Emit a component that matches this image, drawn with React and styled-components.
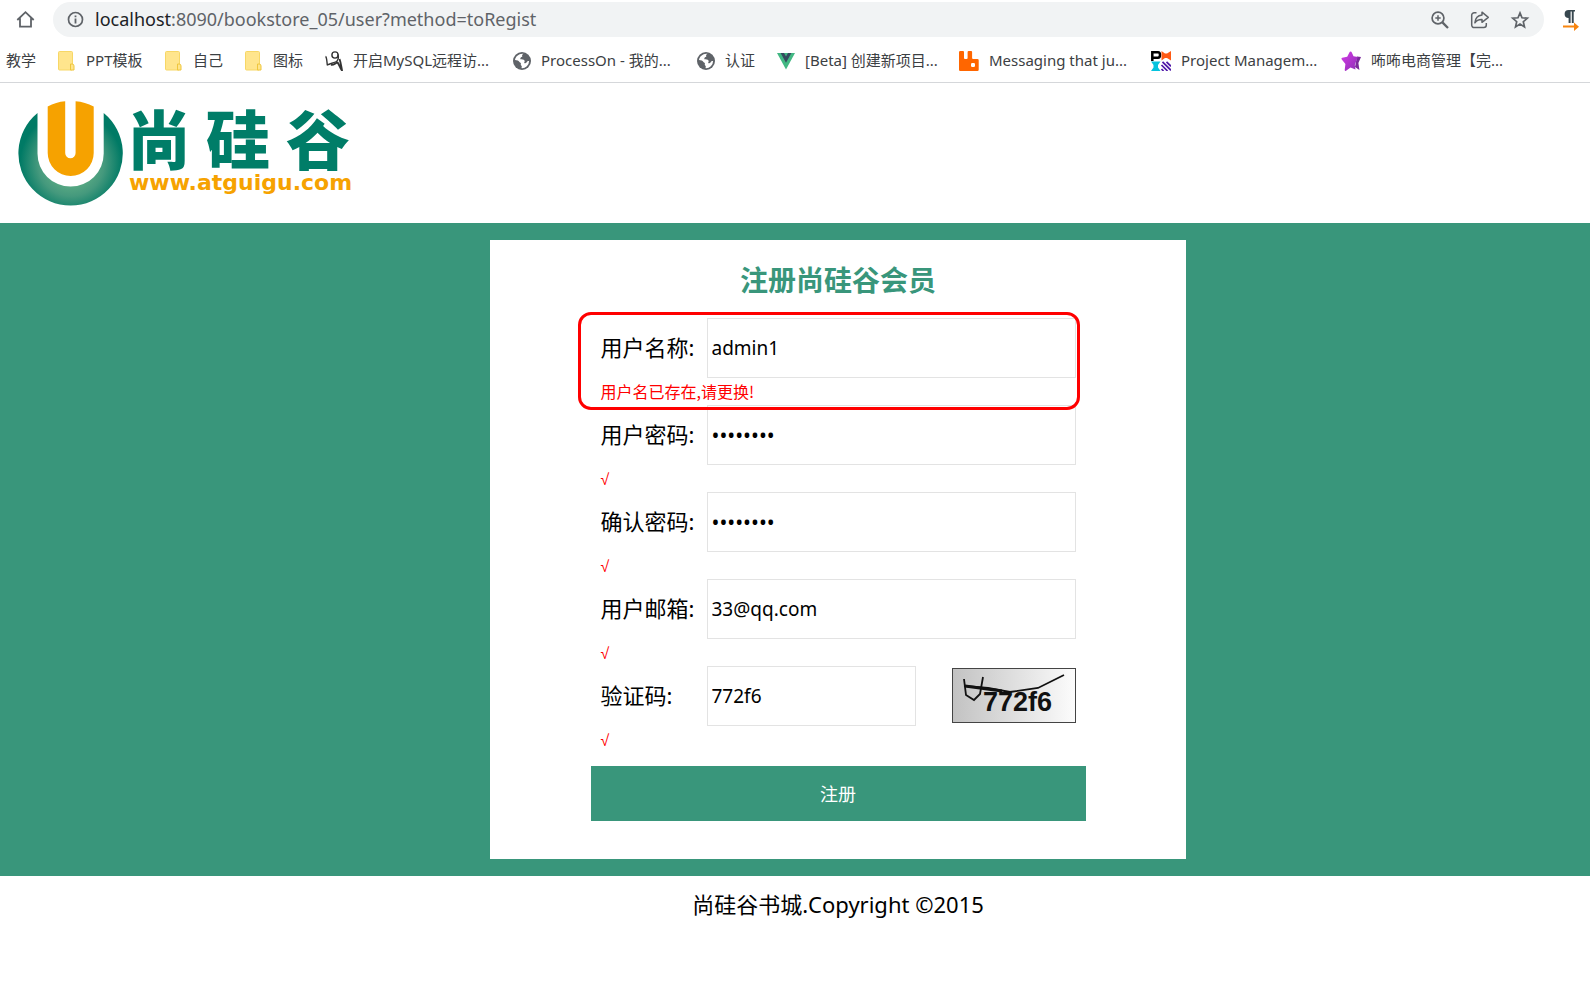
import React from "react";
import styled, { createGlobalStyle } from "styled-components";

const GREEN = "#39967b";
const PAGE_SHIFT = "86px";

const GlobalStyle = createGlobalStyle`
  *, *::before, *::after { box-sizing: border-box; }
  body {
    margin: 0;
    background: #fff;
    color: #000;
    font-family: "Noto Sans", "Noto Sans CJK SC", sans-serif;
  }
`;

/* ---------- browser chrome ---------- */

const Chrome = styled.header`
  border-bottom: 1px solid #d5d7da;
`;

const AddressRow = styled.div`
  display: flex;
  align-items: center;
  height: 39px;
  padding: 0 10px 0 16px;
`;

const IconButton = styled.button`
  display: flex;
  flex: none;
  padding: 0;
  border: 0;
  background: none;
  color: #5f6368;
  svg { display: block; }
`;

const Omnibox = styled.div`
  display: flex;
  flex: 1;
  align-items: center;
  height: 35px;
  margin: 0 18px;
  padding: 0 14px;
  border-radius: 18px;
  background: #f1f3f4;
  color: #5f6368;
  svg { flex: none; display: block; }
`;

const Url = styled.div`
  flex: 1;
  margin-left: 11px;
  padding-bottom: 2px;
  font-size: 18px;
  line-height: 24px;
  white-space: nowrap;
  b { color: #202124; font-weight: 400; }
`;

const Actions = styled.div`
  display: flex;
  gap: 20px;
`;

const Bookmarks = styled.nav`
  display: flex;
  align-items: center;
  height: 43px;
  padding-left: 6px;
  overflow: hidden;
`;

const Bookmark = styled.a`
  display: flex;
  flex: none;
  align-items: center;
  gap: 10px;
  width: ${(p) => p.$width}px;
  color: #3c4043;
  font-size: 15px;
  line-height: 22px;
  text-decoration: none;
  white-space: nowrap;
  svg { flex: none; display: block; }
  span { padding-bottom: 2px; }
`;

/* ---------- page ---------- */

const Brand = styled.div`
  height: 140px;
  padding-left: 17px;
  svg { display: block; }
`;

const Band = styled.main`
  display: flex;
  justify-content: center;
  padding: 17px 0 17px ${PAGE_SHIFT};
  background: ${GREEN};
`;

const Card = styled.form`
  display: flex;
  flex-direction: column;
  align-items: center;
  width: 696px;
  padding-bottom: 38px;
  background: #fff;
`;

const Title = styled.h1`
  margin: 0;
  padding: 19px 0;
  color: ${GREEN};
  font-family: "Noto Sans CJK SC", sans-serif;
  font-size: 28px;
  line-height: 40px;
  font-weight: 700;
`;

const Fields = styled.div`
  position: relative;
  width: 495px;
`;

const Field = styled.div`
  padding: 0 10px;
`;

const FieldRow = styled.div`
  display: flex;
  align-items: center;
`;

const Label = styled.label`
  flex: none;
  width: 106px;
  padding-bottom: 2px;
  font-size: 22px;
  line-height: 32px;
  white-space: nowrap;
`;

const TextInput = styled.input`
  flex: ${(p) => (p.$short ? "0 0 209px" : "1")};
  min-width: 0;
  height: 60px;
  padding: 0 4px;
  border: 1px solid #e3e3e3;
  border-radius: 0;
  outline: 0;
  background: #fff;
  color: #000;
  font-family: "Noto Sans", sans-serif;
  font-size: ${(p) => (p.type === "password" ? 21 : 19)}px;
`;

const Message = styled.div`
  height: 27px;
  color: #f00;
  font-family: "Noto Sans CJK SC", sans-serif;
  font-size: 16px;
  line-height: 26px;
`;

const Tick = styled.span`
  font-family: "Liberation Sans", sans-serif;
`;

const Highlight = styled.div`
  position: absolute;
  inset: -6px 6px auto -13px;
  height: 98px;
  border: 3px solid #f00;
  border-radius: 13px;
  pointer-events: none;
`;

const Captcha = styled.svg`
  display: block;
  margin: 0 0 2px auto;
`;

const Submit = styled.button`
  width: 495px;
  height: 55px;
  margin-top: 13px;
  padding: 0 0 2px;
  border: 0;
  background: ${GREEN};
  color: #fff;
  font-family: "Noto Sans CJK SC", sans-serif;
  font-size: 18px;
`;

const Footer = styled.footer`
  padding: 12px 0 14px ${PAGE_SHIFT};
  font-size: 22px;
  line-height: 32px;
  text-align: center;
`;

/* ---------- icons ---------- */

const Home = () => (
  <svg width="19" height="19" viewBox="0 0 19 19" fill="none" stroke="currentColor" strokeWidth="1.8">
    <path d="M1.3 10 9.5 2.2 17.700 10M4 8.200V16.700H15V8.200" />
  </svg>
);

const Info = () => (
  <svg width="17" height="17" viewBox="0 0 17 17">
    <circle cx="8.500" cy="8.500" r="7" fill="none" stroke="currentColor" strokeWidth="1.700" />
    <path d="M7.600 7.500h1.800v5H7.600zM7.600 4.500h1.800v1.800H7.600z" fill="currentColor" />
  </svg>
);

const ZoomIn = () => (
  <svg width="20" height="20" viewBox="0 0 20 20" fill="none" stroke="currentColor">
    <circle cx="8" cy="8" r="5.900" strokeWidth="1.700" />
    <path d="M12.400 12.400 18 18" strokeWidth="2.300" />
    <path d="M5.300 8h5.400M8 5.300v5.400" strokeWidth="1.500" />
  </svg>
);

const Share = () => (
  <svg width="20" height="20" viewBox="0 0 20 20" fill="none" stroke="currentColor" strokeWidth="1.500" strokeLinejoin="round">
    <path d="M6.500 2.700H4.200A2.500 2.500 0 0 0 1.700 5.200v9.900a2.500 2.500 0 0 0 2.500 2.500h9.600a2.500 2.500 0 0 0 2.500-2.500v-2" />
    <path d="M12 2.200 18.300 7.300 12 12.300V9.500C8.500 9.400 6.300 10.500 4.900 12.800 5.300 8.600 7.800 5.600 12 5.100Z" />
  </svg>
);

const Star = () => (
  <svg width="20" height="20" viewBox="0 0 20 20" fill="none" stroke="currentColor" strokeWidth="1.700">
    <path d="m10 2.900 2 4.900 5.300.4-4 3.500 1.200 5.200L10 14.100l-4.500 2.800 1.200-5.200-4-3.500L8 7.800Z" />
  </svg>
);

const Pilcrow = () => (
  <svg width="18" height="22" viewBox="0 0 18 22">
    <path d="M13 1v1.500H11.700V14H9.800V2.500H8.600V14H6.600V9A4 4 0 0 1 6.600 1Z" fill="#37474f" />
    <path d="M1 16.600h11v-3.200l5 4.300-5 4.300v-3.400H1Z" fill="#f8850f" />
  </svg>
);

const Folder = () => (
  <svg width="18" height="20" viewBox="0 0 18 20">
    <rect x=".5" y=".5" width="14" height="18.500" rx="1" fill="#ffe58d" stroke="#f7d766" />
    <path d="M12.500 13h1.600q1.900 0 1.900 1.900V19h-3.500Z" fill="#ffe58d" stroke="#efc63c" />
  </svg>
);

const Figure = () => (
  <svg width="18" height="20" viewBox="0 0 18 20" fill="none" stroke="#333" strokeLinejoin="round">
    <circle cx="10" cy="4" r="3.100" strokeWidth="1.400" />
    <path d="M.5 5.500C1.800 6 1.800 10 2.300 14 5 12.500 9 12 11.500 10.500 13.300 9 13.700 6.500 13 3.500" strokeWidth="1.400" />
    <path d="M6 13.800C9 14.500 10 12 12.500 11.500 14 13 14.500 16 17 19.500 16.300 16 16 12 14.500 8" strokeWidth="1.900" />
  </svg>
);

const Globe = () => (
  <svg width="18" height="18" viewBox="0 0 18 18">
    <circle cx="9" cy="9" r="9" fill="#5f6368" />
    <path
      d="M10.500 1.800C9.300 2.500 8.800 3.600 9.300 4.800 8 5 7.200 6 7.300 7.300c1.600.2 3.400 0 4.200 1.300.6 1-.3 1.600-.3 2.500.9.500 2 .2 2.500-.8.500-1 1.300-1.500 2.400-1.300a7.100 7.100 0 0 1-7.700 7.100c.7-.9.500-1.700-.2-2.500-.7-.8-.3-1.700-.3-2.600C6.500 11 6 9 4.800 8.600 3.900 8.300 2.900 8.200 2 8 2.500 4.500 6 1.200 10.500 1.800Z"
      fill="#fff"
    />
  </svg>
);

const Vue = () => (
  <svg width="18" height="18" viewBox="0 0 18 18">
    <path d="M0 1h18L9 17.500Z" fill="#42b883" />
    <path d="M3.600 1H7l2 3.400L11 1h3.400L9 10.800Z" fill="#35495e" />
  </svg>
);

const Rabbit = () => (
  <svg width="20" height="20" viewBox="0 0 20 20">
    <path
      d="M1.200 0H4q1 0 1 1v6q0 1 1 1h1.600q1 0 1-1V1q0-1 1-1h2.500q1 0 1 1v6q0 1 1 1H18.500q1.200 0 1.200 1.200v9.600q0 1.200-1.200 1.200H1.200Q0 20 0 18.800V1.200Q0 0 1.200 0Z"
      fill="#f60"
    />
    <rect x="12" y="12" width="4" height="4" rx="1.200" fill="#fff" />
  </svg>
);

const ProjectGrid = () => (
  <svg width="20" height="20" viewBox="0 0 20 20">
    <path d="M1.300 10V1.300H7q2 0 2 2.700t-2 2.700H1" fill="none" stroke="#000" strokeWidth="2.500" />
    <path d="M10.500 0 14 2.500h2L20 0v9.500L16 7h-2l-3.500 2.500Z" fill="#ff5a14" />
    <path d="M0 10.500h9.500L7 14v2.500L9.500 20H0l2.500-3.500V14Z" fill="#05c3de" />
    <path d="m10.500 14 6 6M10.500 18l2 2M11.500 10.800l8.500 8.500M15.500 10.800l4.500 4.500" stroke="#4f17a8" strokeWidth="1.700" />
  </svg>
);

const PurpleStar = () => (
  <svg width="20" height="20" viewBox="0 0 20 20">
    <defs>
      <linearGradient id="starFill" x1="0" y1="0" x2="1" y2="1">
        <stop offset="0" stopColor="#d63be8" />
        <stop offset="1" stopColor="#8b2fb4" />
      </linearGradient>
    </defs>
    <path d="m16 5.500 4 .5-2.600 5.900 1 7.100-4.400-3Z" fill="#7c2a9c" />
    <path d="M9.500.5q1 0 1.300 1L12.500 5.300l4.300.6-3 8 .7 4.600-5-2L4.700 20q-1 0-1-1l.7-6L.6 8.300Q0 7 1.200 6.700l5-1L8.500 1.300Q8.800.5 9.500.5Z" fill="url(#starFill)" />
  </svg>
);

const LogoGlyph = styled.text`
  fill: #007d68;
  font-family: "Noto Sans CJK SC", sans-serif;
  font-size: 64px;
  font-weight: 900;
`;

const LogoUrl = styled.text`
  fill: #f6a200;
  font-family: "DejaVu Sans", sans-serif;
  font-size: 22px;
  font-weight: 700;
`;

const Logo = () => (
  <svg width="345" height="140" viewBox="17 83 345 140" role="img" aria-label="尚硅谷">
    <defs>
      <radialGradient id="ring" gradientUnits="userSpaceOnUse" cx="71" cy="163" r="51">
        <stop offset=".4" stopColor="#5bab84" />
        <stop offset=".65" stopColor="#45997d" />
        <stop offset="1" stopColor="#007a65" />
      </radialGradient>
    </defs>
    <path d="M37.500 113A52.200 52.200 0 1 0 103.700 113V153.500a33.100 33.100 0 0 1-66.200 0Z" fill="url(#ring)" />
    <path
      d="M47.700 106.500Q56 102 65.200 101.300V153a5.200 5.200 0 0 0 10.400 0V101.300Q85 102 93.700 106.500V153a23 23 0 0 1-46 0Z"
      fill="#f6a200"
    />
    <LogoGlyph x="127" y="164">尚</LogoGlyph>
    <LogoGlyph x="206" y="164">硅</LogoGlyph>
    <LogoGlyph x="286" y="164">谷</LogoGlyph>
    <LogoUrl x="129" y="190">www.atguigu.com</LogoUrl>
  </svg>
);

const CaptchaImage = () => (
  <Captcha width="124" height="55" viewBox="0 0 124 55" role="img" aria-label="772f6">
    <defs>
      <linearGradient id="paper">
        <stop offset="0" stopColor="#c2c2c2" />
        <stop offset="1" stopColor="#fcfcfc" />
      </linearGradient>
    </defs>
    <rect x=".5" y=".5" width="123" height="54" fill="url(#paper)" stroke="#444" />
    <text x="31" y="43" fontFamily='"Liberation Sans", sans-serif' fontWeight="700" fontSize="27" fill="#111">
      772f6
    </text>
    <path d="M12 18 36 20 58 24 86 20 112 7" fill="none" stroke="#111" strokeWidth="1.800" />
    <path d="M13 18 50 23" stroke="#111" strokeWidth="3" />
    <path d="M12 11 14 27 22 32 28 26 31 9" fill="none" stroke="#111" strokeWidth="1.800" />
  </Captcha>
);

/* ---------- data ---------- */

const bookmarks = [
  { text: "教学", width: 52 },
  { icon: <Folder />, text: "PPT模板", width: 107 },
  { icon: <Folder />, text: "自己", width: 80 },
  { icon: <Folder />, text: "图标", width: 80 },
  { icon: <Figure />, text: "开启MySQL远程访...", width: 188 },
  { icon: <Globe />, text: "ProcessOn - 我的...", width: 184 },
  { icon: <Globe />, text: "认证", width: 80 },
  { icon: <Vue />, text: "[Beta] 创建新项目...", width: 182 },
  { icon: <Rabbit />, text: "Messaging that ju...", width: 192 },
  { icon: <ProjectGrid />, text: "Project Managem...", width: 190 },
  { icon: <PurpleStar />, text: "咘咘电商管理【完...", width: 190 },
];

const fields = [
  { id: "username", label: "用户名称:", type: "text", value: "admin1", message: "用户名已存在,请更换!" },
  { id: "password", label: "用户密码:", type: "password", value: "12345678" },
  { id: "confirm", label: "确认密码:", type: "password", value: "12345678" },
  { id: "email", label: "用户邮箱:", type: "text", value: "33@qq.com" },
  { id: "code", label: "验证码:", type: "text", value: "772f6", captcha: true },
];

export default function App() {
  return (
    <>
      <GlobalStyle />
      <Chrome>
        <AddressRow>
          <IconButton type="button" aria-label="Home"><Home /></IconButton>
          <Omnibox>
            <Info />
            <Url><b>localhost</b>:8090/bookstore_05/user?method=toRegist</Url>
            <Actions>
              <IconButton type="button" aria-label="Zoom"><ZoomIn /></IconButton>
              <IconButton type="button" aria-label="Share"><Share /></IconButton>
              <IconButton type="button" aria-label="Bookmark"><Star /></IconButton>
            </Actions>
          </Omnibox>
          <IconButton type="button" aria-label="Extension"><Pilcrow /></IconButton>
        </AddressRow>
        <Bookmarks>
          {bookmarks.map((b) => (
            <Bookmark key={b.text} href="#" $width={b.width}>
              {b.icon}
              <span>{b.text}</span>
            </Bookmark>
          ))}
        </Bookmarks>
      </Chrome>

      <Brand><Logo /></Brand>

      <Band>
        <Card onSubmit={(e) => e.preventDefault()}>
          <Title>注册尚硅谷会员</Title>
          <Fields>
            {fields.map((f) => (
              <Field key={f.id}>
                <FieldRow>
                  <Label htmlFor={f.id}>{f.label}</Label>
                  <TextInput id={f.id} type={f.type} defaultValue={f.value} $short={f.captcha} />
                  {f.captcha && <CaptchaImage />}
                </FieldRow>
                <Message>{f.message || <Tick>√</Tick>}</Message>
              </Field>
            ))}
            <Highlight />
          </Fields>
          <Submit type="submit">注册</Submit>
        </Card>
      </Band>

      <Footer>尚硅谷书城.Copyright ©2015</Footer>
    </>
  );
}
